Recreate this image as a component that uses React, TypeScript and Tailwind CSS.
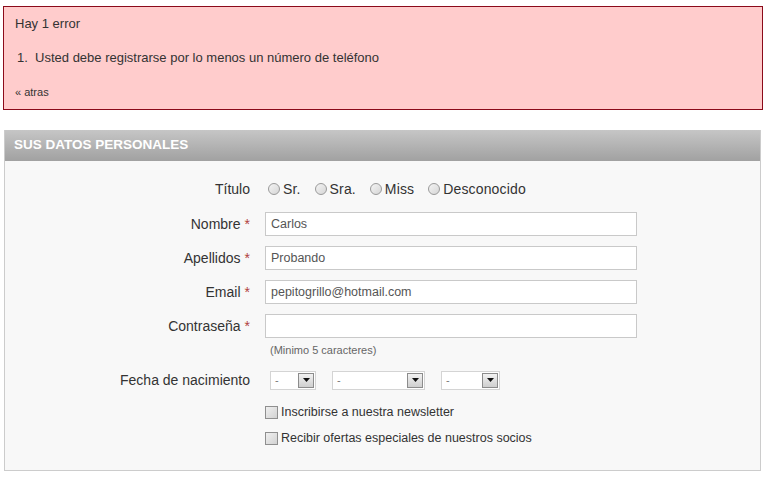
import React from "react";

const font = { fontFamily: '"Liberation Sans", Arial, sans-serif' };

function Radio({ label }: { label: string }) {
  return (
    <span className="flex items-center mr-[11px]">
      <span className="w-[12px] h-[12px] rounded-full border border-[#9a9a9a] bg-gradient-to-br from-[#f4f4f4] to-[#d6d6d6] mr-[3px] ml-[3px]"></span>
      <span className="text-[14px] text-[#333] tracking-[0.15px]">{label}</span>
    </span>
  );
}

function Select({ width }: { width: string }) {
  return (
    <span className={`${width} h-[19px] bg-white border border-[#d4d4d4] flex items-center justify-between pl-[4px] pr-[1px]`}>
      <span className="text-[11px] text-[#777]">-</span>
      <span className="w-[16px] h-[15px] border border-[#8c8c8c] bg-gradient-to-b from-[#f2f2f2] to-[#cfcfcf] flex items-center justify-center">
        <svg width="7" height="4" viewBox="0 0 7 4"><path d="M0 0h7L3.5 4z" fill="#111" /></svg>
      </span>
    </span>
  );
}

function Check({ label }: { label: string }) {
  return (
    <div className="flex items-center h-[26px]">
      <span className="w-[13px] h-[13px] border border-[#8f8f8f] bg-gradient-to-br from-[#f0f0f0] to-[#d2d2d2] mr-[3px]"></span>
      <span className="text-[12.5px] text-[#333]">{label}</span>
    </div>
  );
}

function Field({ label, value }: { label: string; value?: string }) {
  return (
    <div className="flex items-center h-[24px] mb-[10px]">
      <div className="w-[245px] text-right text-[14px] text-[#333]">
        {label}
        <span className="text-[#b04040] ml-[4px]">*</span>
      </div>
      <div className="ml-[15px] w-[372px] h-[24px] bg-white border border-[#c9c9c9] flex items-center px-[5px] text-[12.5px] text-[#555]">
        {value}
      </div>
    </div>
  );
}

export default function App() {
  return (
    <div className="w-[765px] h-[478px] bg-white pt-[6px] pl-[3px]" style={font}>
      <div className="w-[760px] h-[104px] bg-[#ffcccc] border border-[#8b0a1a] pl-[11px] pt-[9px] text-[#333]">
        <div className="text-[13px] leading-[16px]">Hay 1 error</div>
        <div className="text-[13px] leading-[16px] mt-[18px] pl-[2px]">1.&nbsp; Usted debe registrarse por lo menos un número de teléfono</div>
        <div className="text-[11px] leading-[14px] mt-[19px]">« atras</div>
      </div>
      <div className="ml-[1px] mt-[20px] w-[757px] border border-[#cccccc] border-t-0 bg-[#f8f8f8] h-[341px]">
        <div className="h-[31px] bg-gradient-to-b from-[#c6c6c6] to-[#a1a1a1] flex items-center pl-[9px]">
          <span className="text-white font-bold text-[13.5px]">SUS DATOS PERSONALES</span>
        </div>
        <div className="pt-[18px]">
          <div className="flex items-center h-[20px] mb-[13px]">
            <div className="w-[245px] text-right text-[14px] text-[#333]">Título</div>
            <div className="ml-[15px] flex items-center">
              <Radio label="Sr." />
              <Radio label="Sra." />
              <Radio label="Miss" />
              <Radio label="Desconocido" />
            </div>
          </div>
          <Field label="Nombre" value="Carlos" />
          <Field label="Apellidos" value="Probando" />
          <Field label="Email" value="pepitogrillo@hotmail.com" />
          <div className="flex items-center h-[24px]">
            <div className="w-[245px] text-right text-[14px] text-[#333]">
              Contraseña<span className="text-[#b04040] ml-[4px]">*</span>
            </div>
            <div className="ml-[15px] w-[372px] h-[24px] bg-white border border-[#c9c9c9]"></div>
          </div>
          <div className="pl-[265px] mt-[5px] text-[11px] text-[#666] h-[15px] leading-[15px]">(Minimo 5 caracteres)</div>
          <div className="flex items-center h-[20px] mt-[12px]">
            <div className="w-[245px] text-right text-[14px] text-[#333]">Fecha de nacimiento</div>
            <div className="ml-[20px] flex items-center gap-[16px]">
              <Select width="w-[46px]" />
              <Select width="w-[93px]" />
              <Select width="w-[59px]" />
            </div>
          </div>
          <div className="pl-[260px] mt-[9px]">
            <Check label="Inscribirse a nuestra newsletter" />
            <Check label="Recibir ofertas especiales de nuestros socios" />
          </div>
        </div>
      </div>
    </div>
  );
}
